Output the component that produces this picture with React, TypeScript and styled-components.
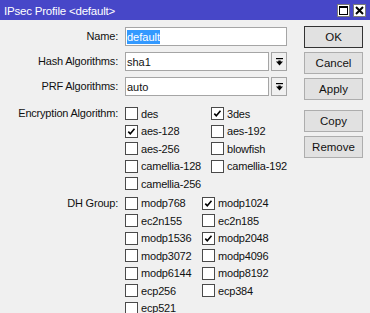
import styled, { createGlobalStyle } from 'styled-components';

const GlobalStyle = createGlobalStyle`
  html, body {
    margin: 0;
    padding: 0;
    background: #f0f0f0;
  }
  body {
    font-family: "Liberation Sans", Arial, sans-serif;
    font-size: 11px;
    color: #111111;
  }
`;

const Window = styled.div`
  width: 370px;
  height: 313px;
  background: #f0f0f0;
  display: flex;
  flex-direction: column;
  overflow: hidden;
`;

const TitleBar = styled.div`
  height: 20px;
  flex-shrink: 0;
  background: #4747c8;
  color: #ffffff;
  display: flex;
  align-items: center;
  padding: 0 4px 0 4px;
  font-size: 11.5px;
  letter-spacing: -0.2px;
`;

const Title = styled.span`
  flex: 1;
  margin-top: 1px;
`;

const TitleButtons = styled.div`
  display: flex;
  gap: 3px;
`;

const TitleButton = styled.div`
  width: 13px;
  height: 13px;
  box-sizing: border-box;
  background: #ffffff;
  border: 1px solid #7a7a7a;
  display: flex;
  align-items: center;
  justify-content: center;
`;

const Body = styled.div`
  display: flex;
  padding-top: 6px;
  gap: 17px;
`;

const Form = styled.div`
  display: flex;
  flex-direction: column;
  padding-top: 1px;
`;

const FieldRow = styled.div<{ $top?: number }>`
  display: flex;
  gap: 7px;
  margin-top: ${(p) => p.$top ?? 0}px;
`;

const Label = styled.div<{ $h: number }>`
  width: 118px;
  text-align: right;
  height: ${(p) => p.$h}px;
  line-height: ${(p) => p.$h}px;
  white-space: nowrap;
  letter-spacing: -0.2px;
`;

const TextBox = styled.div<{ $w: number }>`
  width: ${(p) => p.$w}px;
  height: 19px;
  box-sizing: border-box;
  background: #ffffff;
  border: 1px solid #a5a5a5;
  padding: 0 1px;
  display: flex;
  align-items: center;
`;

const Selected = styled.span`
  background: #3399ff;
  color: #ffffff;
  line-height: 14px;
  display: inline-block;
`;

const SelectWrap = styled.div`
  display: flex;
  gap: 2px;
`;

const DropButton = styled.div`
  width: 16px;
  height: 19px;
  box-sizing: border-box;
  border: 1px solid #a5a5a5;
  background: #f0f0f0;
  display: flex;
  align-items: center;
  justify-content: center;
`;

const CheckGrid = styled.div<{ $col: number }>`
  display: grid;
  grid-template-columns: ${(p) => p.$col}px auto;
  row-gap: 4.5px;
`;

const CheckItem = styled.div`
  display: flex;
  align-items: center;
  height: 13px;
  gap: 3px;
  white-space: nowrap;
  letter-spacing: -0.2px;
`;

const Box = styled.div`
  width: 13px;
  height: 13px;
  box-sizing: border-box;
  border: 1px solid #4a4a4a;
  background: #ffffff;
  display: flex;
  align-items: center;
  justify-content: center;
`;

const ButtonColumn = styled.div`
  display: flex;
  flex-direction: column;
  gap: 4px;
  width: 59px;
`;

const Button = styled.div<{ $default?: boolean; $top?: number }>`
  height: 22px;
  box-sizing: border-box;
  background: #e1e1e1;
  border: 1px solid ${(p) => (p.$default ? '#333333' : '#adadad')};
  display: flex;
  align-items: center;
  justify-content: center;
  font-size: 11.5px;
  margin-top: ${(p) => p.$top ?? 0}px;
`;

const Tick = () => (
  <svg width="11" height="11" viewBox="0 0 11 11">
    <path d="M2.3 5.6 L4.3 7.8 L8.5 2.8" fill="none" stroke="#000" strokeWidth="1.6" />
  </svg>
);

const DropIcon = () => (
  <svg width="7" height="8" viewBox="0 0 7 8">
    <rect x="0" y="0" width="7" height="1.2" fill="#000" />
    <polygon points="0,3.5 7,3.5 3.5,7.5" fill="#000" />
    <rect x="2.3" y="2.5" width="2.4" height="1.5" fill="#000" />
  </svg>
);

type Opt = { name: string; on?: boolean };

const Check = ({ name, on }: Opt) => (
  <CheckItem>
    <Box>{on && <Tick />}</Box>
    <span>{name}</span>
  </CheckItem>
);

const encryption: (Opt | null)[] = [
  { name: 'des' }, { name: '3des', on: true },
  { name: 'aes-128', on: true }, { name: 'aes-192' },
  { name: 'aes-256' }, { name: 'blowfish' },
  { name: 'camellia-128' }, { name: 'camellia-192' },
  { name: 'camellia-256' }, null,
];

const dhGroups: (Opt | null)[] = [
  { name: 'modp768' }, { name: 'modp1024', on: true },
  { name: 'ec2n155' }, { name: 'ec2n185' },
  { name: 'modp1536' }, { name: 'modp2048', on: true },
  { name: 'modp3072' }, { name: 'modp4096' },
  { name: 'modp6144' }, { name: 'modp8192' },
  { name: 'ecp256' }, { name: 'ecp384' },
  { name: 'ecp521' }, null,
];

const Select = ({ value }: { value: string }) => (
  <SelectWrap>
    <TextBox $w={144}>{value}</TextBox>
    <DropButton>
      <DropIcon />
    </DropButton>
  </SelectWrap>
);

export default function App() {
  return (
    <>
      <GlobalStyle />
      <Window>
        <TitleBar>
          <Title>IPsec Profile &lt;default&gt;</Title>
          <TitleButtons>
            <TitleButton>
              <svg width="9" height="9" viewBox="0 0 9 9">
                <rect x="0.5" y="1" width="8" height="7.5" fill="none" stroke="#000" strokeWidth="1" />
                <rect x="0" y="0" width="9" height="2" fill="#000" />
              </svg>
            </TitleButton>
            <TitleButton>
              <svg width="9" height="9" viewBox="0 0 9 9">
                <path d="M1 1 L8 8 M8 1 L1 8" stroke="#000" strokeWidth="2" />
              </svg>
            </TitleButton>
          </TitleButtons>
        </TitleBar>
        <Body>
          <Form>
            <FieldRow>
              <Label $h={19}>Name:</Label>
              <TextBox $w={162}>
                <Selected>default</Selected>
              </TextBox>
            </FieldRow>
            <FieldRow $top={6}>
              <Label $h={19}>Hash Algorithms:</Label>
              <Select value="sha1" />
            </FieldRow>
            <FieldRow $top={6}>
              <Label $h={19}>PRF Algorithms:</Label>
              <Select value="auto" />
            </FieldRow>
            <FieldRow $top={11}>
              <Label $h={13}>Encryption Algorithm:</Label>
              <CheckGrid $col={86}>
                {encryption.map((o, i) => (o ? <Check key={i} {...o} /> : <span key={i} />))}
              </CheckGrid>
            </FieldRow>
            <FieldRow $top={6.5}>
              <Label $h={13}>DH Group:</Label>
              <CheckGrid $col={77}>
                {dhGroups.map((o, i) => (o ? <Check key={i} {...o} /> : <span key={i} />))}
              </CheckGrid>
            </FieldRow>
          </Form>
          <ButtonColumn>
            <Button $default>OK</Button>
            <Button>Cancel</Button>
            <Button>Apply</Button>
            <Button $top={6}>Copy</Button>
            <Button>Remove</Button>
          </ButtonColumn>
        </Body>
      </Window>
    </>
  );
}
